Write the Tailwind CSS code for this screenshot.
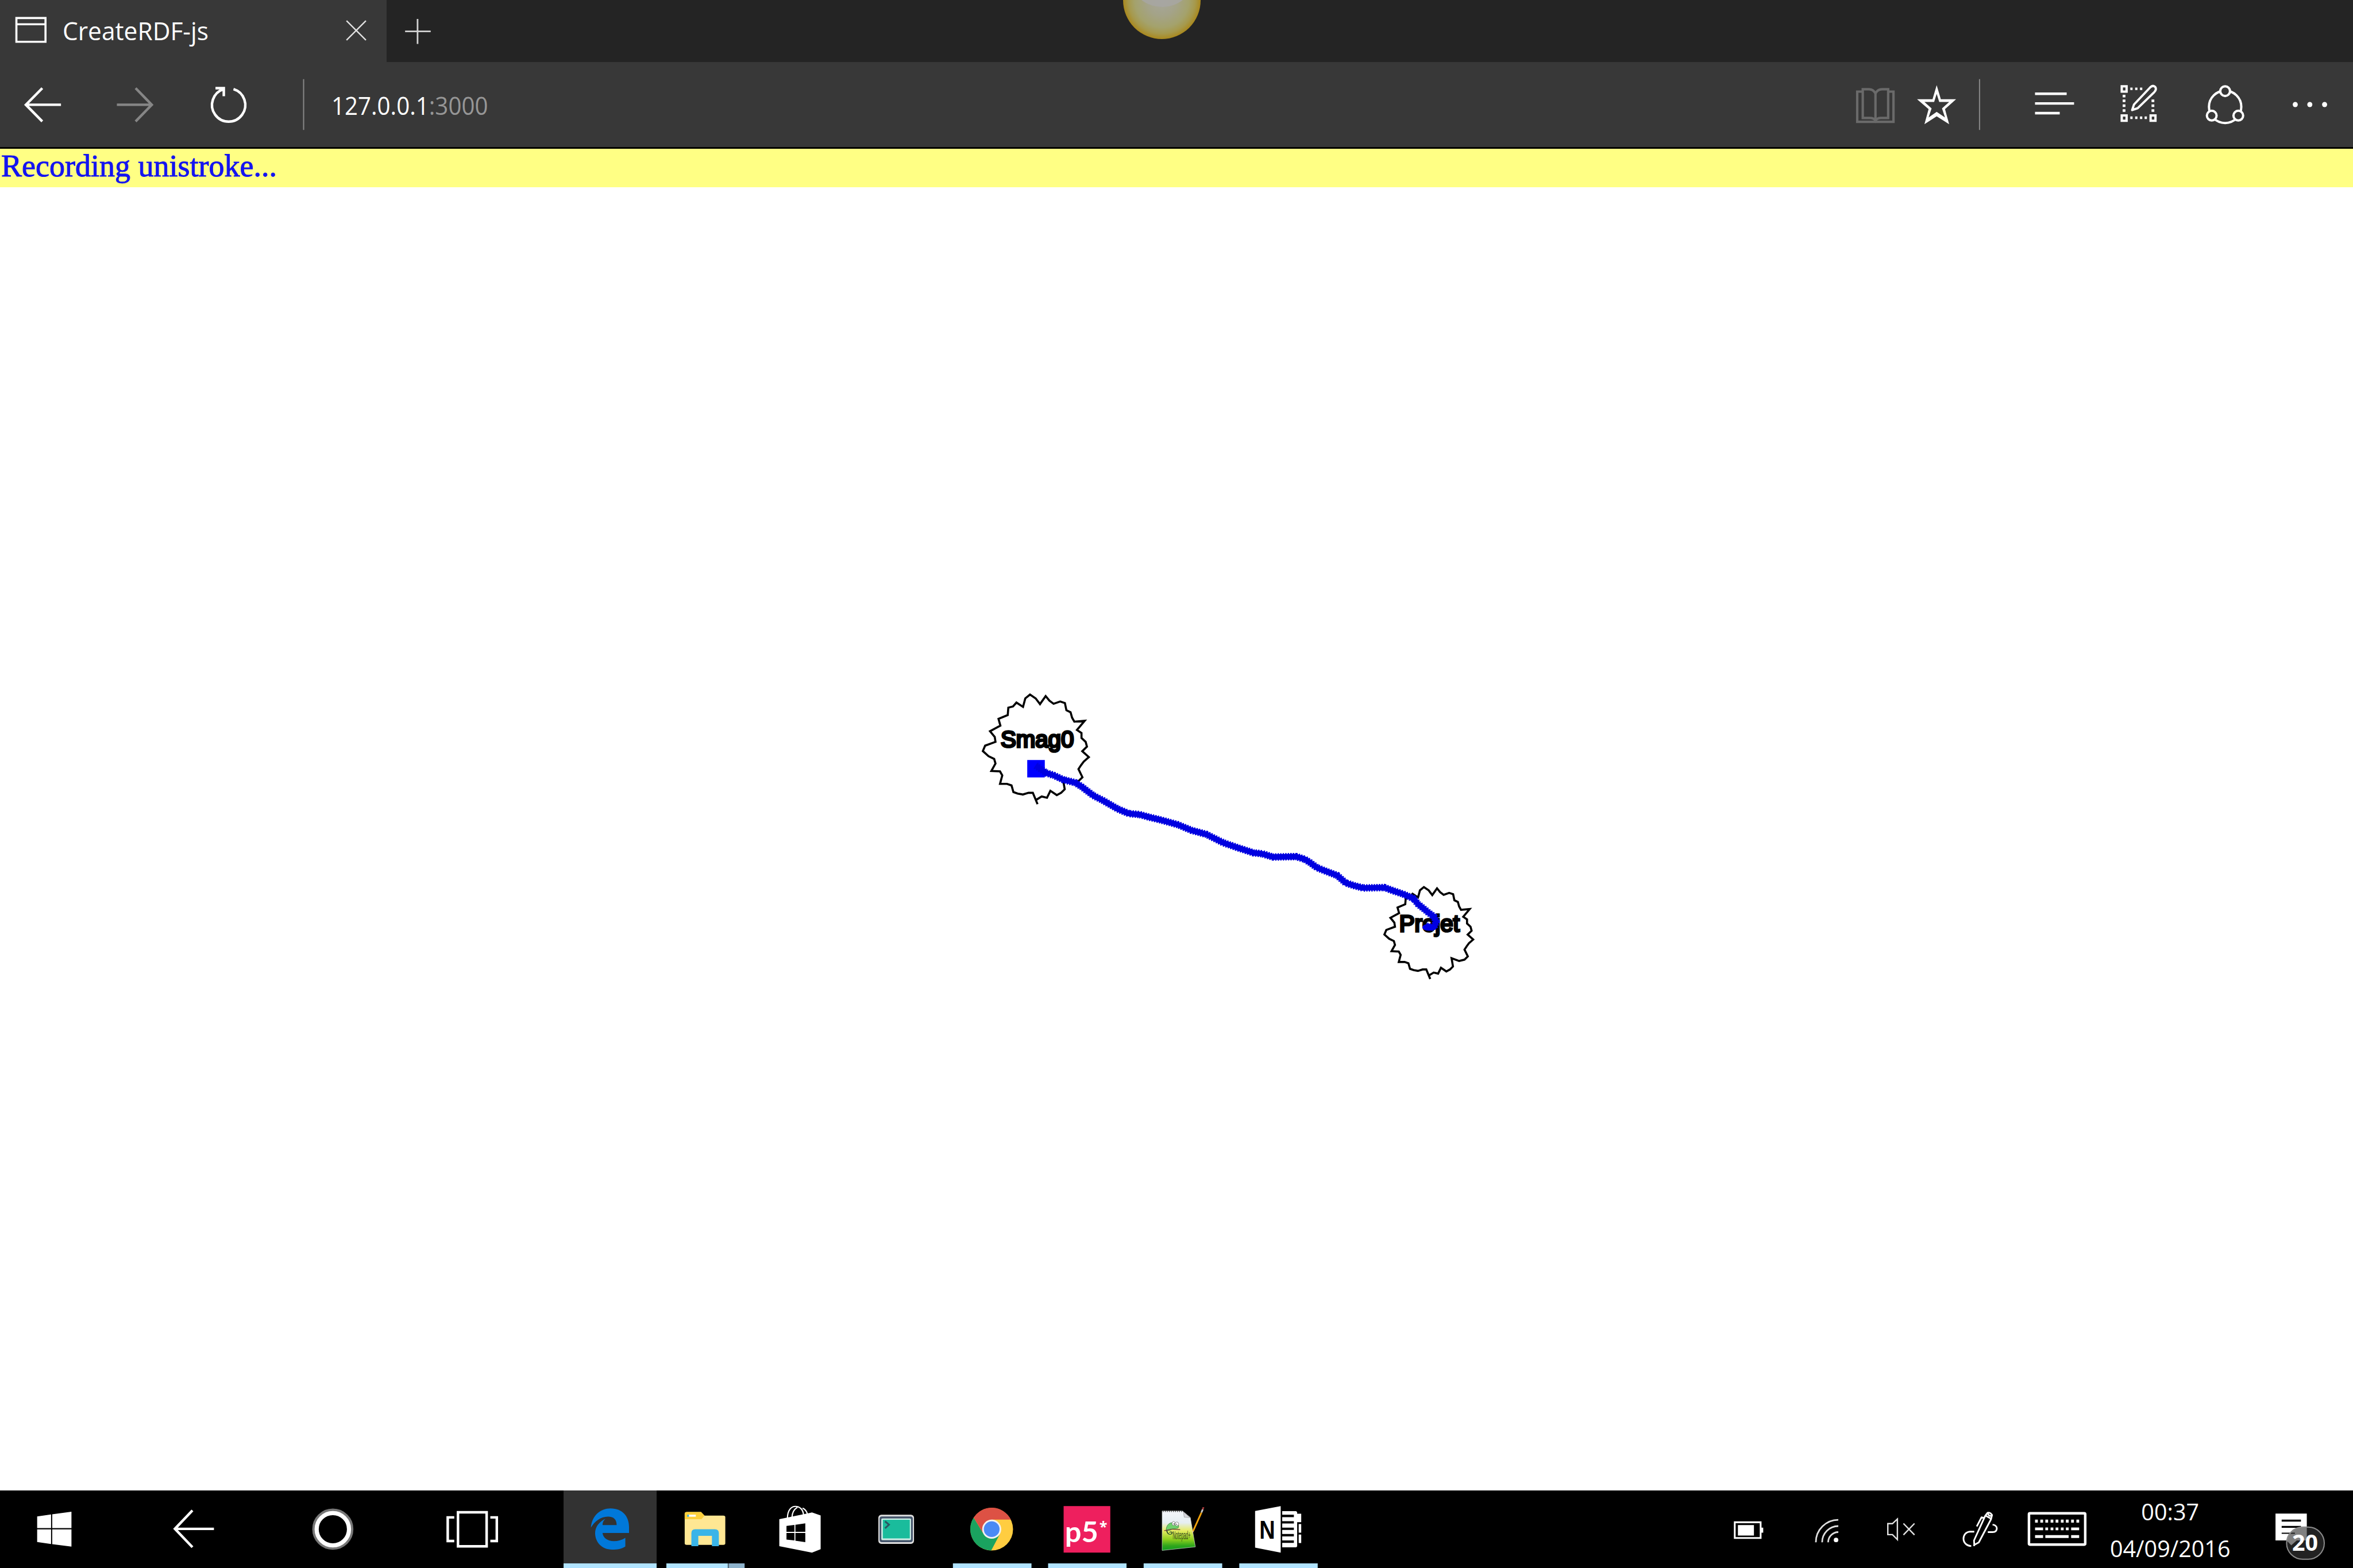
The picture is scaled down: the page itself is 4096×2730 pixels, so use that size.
<!DOCTYPE html>
<html lang="en">
<head>
<meta charset="utf-8">
<title>CreateRDF-js</title>
<script src="https://cdn.jsdelivr.net/npm/@tailwindcss/browser@4"></script>
</head>
<body class="bg-white overflow-hidden">
<div class="flex flex-col w-[4096px] h-[2730px] overflow-hidden font-['Open_Sans','Noto_Sans',sans-serif]">

  <!-- Tab strip -->
  <header class="relative flex h-[108px] shrink-0 bg-[#242424] overflow-hidden">
    <div class="flex items-center w-[673px] h-full bg-[#383838] text-white">
      <svg class="h-[108px] w-auto shrink-0" viewBox="0 0 136 134.3" fill="none" stroke="#fff" stroke-width="4.500"><path d="M35.500 39H98.500V90.500H35.500ZM35.500 52.500H98.500"/></svg>
      <span class="grow whitespace-nowrap text-[43px] leading-[108px]"><span class="inline-block origin-left scale-x-[0.987]">CreateRDF-js</span></span>
      <svg class="h-[108px] w-auto shrink-0" viewBox="700 0 137 134.3" fill="none" stroke="#e0e0e0" stroke-width="3"><path d="M750 45L792 87M792 45L750 87"/></svg>
    </div>
    <svg class="h-[108px] w-auto shrink-0" viewBox="837 0 140 134.3" fill="none" stroke="#d2d2d2" stroke-width="3.500"><path d="M877 68H932.500M904 41V95"/></svg>
    <div class="absolute left-[1955px] -top-[67px] size-[135px] rounded-full overflow-hidden bg-[radial-gradient(circle_closest-side,#a6a69c_0%,#a4a388_40%,#a4a26c_70%,#a6994c_86%,#a98c28_97%,#a9881c_100%)]">
      <div class="absolute left-[20px] top-[7px] w-[96px] h-[72px] rounded-[50%] bg-[#a7a6a4]/80"></div>
    </div>
  </header>

  <!-- Address bar -->
  <nav class="flex h-[148px] shrink-0 bg-[#383838] text-white">
    <svg class="h-full w-auto shrink-0" viewBox="0 134 192 184" fill="none" stroke="#fff" stroke-width="5.500"><path d="M132 226.500H56M91.500 190.500L56 226.500L91.500 262.500"/></svg>
    <svg class="h-full w-auto shrink-0" viewBox="192 134 208 184" fill="none" stroke="#868686" stroke-width="5.500"><path d="M253.500 226.500H329M294 190.500L329 226.500L294 262.500"/></svg>
    <svg class="h-full w-auto shrink-0" viewBox="400 134 220 184" fill="none" stroke="#fff" stroke-width="5.500"><path d="M484 192.500A36 36 0 1 0 505 192.500M466 190.500H484V208"/></svg>
    <svg class="h-full w-auto shrink-0" viewBox="620 134 98 184" stroke="#878787" stroke-width="2.500"><path d="M656.700 171V281"/></svg>
    <div class="whitespace-nowrap text-[43px] leading-[148px] pt-[2px]"><span class="inline-block origin-left scale-x-[0.936]">127.0.0.1<span class="text-[#969696]">:3000</span></span></div>

    <svg class="ml-auto h-full w-auto shrink-0" viewBox="3980 134 144 184" fill="none" stroke="#6a6a6a" stroke-width="5.200"><path d="M4029 198H4018.500V263.500H4097V198H4087M4058 202Q4053 193 4044 193H4030.500V255H4046Q4055 255 4058 261Q4061 255 4070 255H4085.500V193H4072Q4063 193 4058 202V259"/></svg>
    <svg class="h-full w-auto shrink-0" viewBox="4124 134 136 184" fill="#fff"><path fill-rule="evenodd" d="M4191.500 184L4200.500 214.500H4233.500L4209.500 236L4218.500 268.500L4191.500 251.500L4165 268.500L4174 236L4149 214.500H4182.500ZM4191.500 203L4186 220.500H4165L4180.500 234.500L4174 254L4191.500 242L4209.500 254L4203 234.500L4218.500 220.500H4197Z"/></svg>
    <svg class="h-full w-auto shrink-0" viewBox="4260 134 80 184" stroke="#878787" stroke-width="2.500"><path d="M4283.500 171V281"/></svg>
    <svg class="h-full w-auto shrink-0" viewBox="4340 134 200 184" fill="none" stroke="#fff" stroke-width="5.500"><path d="M4404 202.700H4472.500M4404 223.700H4488.500M4404 244.700H4457.500"/></svg>
    <svg class="h-full w-auto shrink-0" viewBox="4540 134 180 184" fill="none" stroke="#fff" stroke-width="5">
      <path d="M4591.500 186.500h10.500v11.500h-10.500ZM4591.500 249.500h10.500v11.500h-10.500ZM4654 249.500h10.500v11.500h-10.500Z"/>
      <path stroke-width="5.500" d="M4610 192h5M4620.500 192h5M4631 192h5M4610 254.700h5M4620.500 254.700h5M4631 254.700h5M4641 254.700h5M4593.500 207.700h6M4593.500 218h6M4593.500 228.500h6M4593.500 239h6M4656 218h6M4656 228.500h6M4656 239h6"/>
      <path stroke-width="4.800" stroke-linejoin="round" d="M4614 238L4618 226L4653 189Q4659 183 4664 188Q4667.500 193 4662 199L4626 234Z"/>
    </svg>
    <svg class="h-full w-auto shrink-0" viewBox="4720 134 180 184" fill="#383838" stroke="#fff" stroke-width="5"><circle cx="4815" cy="231" r="35"/><circle cx="4815" cy="197" r="10.500"/><circle cx="4786" cy="250" r="10.500"/><circle cx="4843.500" cy="250" r="10.500"/></svg>
    <svg class="h-full w-auto shrink-0" viewBox="4900 134 192 184" fill="#fff"><circle cx="4966.500" cy="226" r="5.500"/><circle cx="4998" cy="226" r="5.500"/><circle cx="5030" cy="226" r="5.500"/></svg>
  </nav>
  <div class="h-[3px] shrink-0 bg-black"></div>

  <!-- Status line -->
  <div class="h-[67px] shrink-0 pl-[2px] bg-[#ffff84] text-[#1414f0] whitespace-nowrap font-['Liberation_Serif',serif] text-[54px] leading-[60px] [-webkit-text-stroke:1px_#1414f0]">Recording unistroke...</div>

  <!-- Drawing canvas -->
  <main class="h-[2269px] shrink-0 bg-white">
    <svg class="w-[4096px] h-[2269px]" viewBox="0 405.300 5092 2820.700" preserveAspectRatio="none">
      <defs>
        <path id="node" vector-effect="non-scaling-stroke" fill="none" stroke="#000" stroke-width="3.600" d="M405 842L380 768L357 768L327 779L300 773L277 763L267 720L243 710L206 710L218 655L206 629L160 626L182 578L175 548L145 530L115 497L127 462L182 437L178 405L153 368L208 332L198 288L247 263L250 215L275 207L293 182L328 210L340 155L365 130L395 155L418 192L448 140L468 170L490 190L525 175L550 185L558 232L580 245L588 280L600 306L655 300L614 360L638 380L638 412L660 437L667 468L642 498L677 536L650 565L636 588L622 614L643 667L622 692L588 702L540 681L549 745L530 768L507 783L473 755L455 800L427 792L400 812"/>
        <path id="trail" fill="none" stroke="#0000e0" stroke-linejoin="round" d="M2241 1657L2264 1673L2280 1678L2302 1688L2327 1694L2341 1703L2366 1722L2386 1732L2419 1751L2443 1761L2466 1763L2488 1769L2513 1775L2549 1785L2578 1797L2611 1806L2647 1824L2682 1836L2713 1846L2732 1848L2755 1855L2805 1854L2824 1860L2835 1867L2850 1878L2870 1886L2894 1895L2912 1911L2931 1917L2950 1922L2996 1921L3015 1928L3036 1935L3059 1945L3069 1957L3091 1975L3103 1984L3108 1995L3103 2007L3086 2005"/>
      </defs>
      <use href="#node" transform="translate(2080 1460) scale(.40816 .33333)"/>
      <use href="#node" transform="translate(2956.600 1883.700) scale(.3419 .2795)"/>
      <g font-family="Liberation Sans, sans-serif" font-size="50" stroke="#000" stroke-width="4.500">
        <text x="2165.500" y="1617.500">Smag0</text>
        <text x="3028" y="2016.500">Projet</text>
      </g>
      <rect x="2223" y="1645" width="38" height="37.700" fill="#0000ff"/>
      <use href="#trail" stroke-width="12"/>
      <use href="#trail" stroke-width="16" stroke-dasharray="3 2.500"/>
      <ellipse cx="3092" cy="2007" rx="14" ry="7.500" fill="#0000e8"/>
    </svg>
  </main>

  <!-- Taskbar -->
  <footer class="flex h-[135px] shrink-0 bg-black text-white">
    <svg class="h-full w-auto shrink-0" viewBox="0 3226.200 235 167.800" fill="#fff"><path d="M80.400 3282.300L110.500 3278V3307.500H80.400ZM113 3277.700L154.600 3272.300V3307.500H113ZM80.400 3310.500H110.500V3342L80.400 3337.700ZM113 3310.500H154.600V3347.700L113 3342.300Z"/></svg>
    <svg class="h-full w-auto shrink-0" viewBox="235 3226.200 365 167.800" fill="none" stroke="#fff" stroke-width="5.500"><path d="M463 3309.300H379M416.500 3269.500L378.500 3309.300L416.500 3349"/></svg>
    <svg class="h-full w-auto shrink-0" viewBox="600 3226.200 240 167.800" fill="none"><circle cx="719.800" cy="3310" r="41.500" stroke="#777" stroke-width="6"/><circle cx="719.800" cy="3310" r="35" stroke="#fff" stroke-width="9"/></svg>
    <svg class="h-full w-auto shrink-0" viewBox="840 3226.200 379 167.800" fill="none" stroke="#fff" stroke-width="5.500"><path d="M990.700 3273.500H1052.700V3347H990.700ZM982.600 3284.500H968.500V3335.500H982.600M1060.700 3284.500H1074.700V3335.500H1060.700"/></svg>
    <!-- Edge -->
    <svg class="h-full w-auto shrink-0 bg-[#323232]" viewBox="1219 3226.200 202 167.800"><rect x="1219" y="3384" width="202.500" height="10" fill="#b0e3ff"/><path transform="translate(1200 3210) scale(.5357 .3333)" fill="#0078d9" d="M146 290C150 210 185 165 225 165C275 165 300 220 300 285V325H193C195 358 215 378 238 378C256 378 272 370 285 356V412C270 428 252 433 232 433C190 433 163 385 163 325C163 285 180 250 205 232C197 243 193 255 193 273H250C250 237 238 218 215 218C185 218 160 250 146 290Z"/></svg>
    <!-- Explorer -->
    <svg class="h-full w-auto shrink-0" viewBox="1421 3226.200 210 167.800"><g transform="translate(1200 3210) scale(.5357 .3333)"><path fill="#ffe793" d="M526 200Q526 188 535 188H592L606 212H682Q690 212 690 222V392Q690 402 682 402H534Q526 402 526 392Z"/><path fill="#fed03c" d="M526 235V198Q526 188 534 188H592L606 212L594 235Z"/><path fill="#fff" d="M541 206H571V219H541Z"/><path fill="#3ab4e8" d="M536 206H543V219H536ZM553 410V325Q553 300 568 300H648Q664 300 664 325V410H636V343H581V410Z"/><path fill="#b0e3ff" d="M452 522H700V552H452Z"/><path fill="#8eb3cc" d="M704 522H768V552H704Z"/><path fill="#5c7485" d="M700 522H704V552H700Z"/></g></svg>
    <!-- Store -->
    <svg class="h-full w-auto shrink-0" viewBox="1631 3226.200 207 167.800"><g transform="translate(1200 3210) scale(.5357 .3333)"><path fill="#fff" d="M908 235L1030 195L1040 191L1075 211V430L1040 452L908 410Z"/><path d="M937 279L969 272V317H937ZM973 271L1013 262V317H973ZM937 325H969V373L937 367ZM973 325H1013V384L973 375Z"/><path fill="none" stroke="#fff" stroke-width="2.200" vector-effect="non-scaling-stroke" d="M941 228C941 175 957 152 973 152C991 152 1004 172 1006 208M959 224C960 190 968 170 981 158M1002 163C1012 170 1018 182 1021 200"/></g></svg>
    <!-- Console -->
    <svg class="h-full w-auto shrink-0" viewBox="1838 3226.200 205 167.800"><g transform="translate(1200 3210) scale(.5357 .3333)"><rect x="1307" y="206" width="144" height="189" rx="12" ry="20" fill="#dedede"/><rect x="1312" y="217" width="134" height="167" rx="9" ry="15" fill="#44546b"/><rect x="1319" y="230" width="120" height="141" rx="4" ry="7" fill="#cfeee7"/><rect x="1325" y="239" width="109" height="121" fill="#1abc9c"/><path fill="none" stroke="#2c5663" stroke-width="3" vector-effect="non-scaling-stroke" d="M1334 249L1350 271L1334 294"/></g></svg>
    <!-- Chrome -->
    <svg class="h-full w-auto shrink-0" viewBox="2043 3226.200 207 167.800"><rect x="2061.400" y="3384" width="170" height="10" fill="#b0e3ff"/><g transform="translate(2145.300 3310)"><circle r="46.200" fill="#ffcd40"/><path fill="#1aa35f" d="M-39 -25A46.200 46.200 0 0 0 -1 46.200L17 12L-19 8Z"/><path fill="#dd5144" d="M-39 -25A46.200 46.200 0 0 1 41.500 -20.600H0L-19 8Z"/><circle r="20.600" fill="#f1f1f1"/><circle r="17" fill="#4a8af5"/></g></svg>
    <!-- p5 -->
    <svg class="h-full w-auto shrink-0" viewBox="2250 3226.200 206 167.800"><rect x="2268" y="3384" width="169.700" height="10" fill="#b0e3ff"/><rect x="2301.600" y="3260" width="101" height="100.700" fill="#ee1f5e"/><g fill="#fff" font-weight="700"><text x="2304.500" y="3338.500" font-family="Lato, sans-serif" font-size="62" textLength="72" lengthAdjust="spacingAndGlyphs">p5</text><text x="2379" y="3315.500" font-family="Open Sans, sans-serif" font-size="30" textLength="17" lengthAdjust="spacingAndGlyphs">*</text></g></svg>
    <!-- Notepad++ -->
    <svg class="h-full w-auto shrink-0" viewBox="2456 3226.200 206 167.800">
      <defs><linearGradient id="page" x1="0" y1="0" x2="0" y2="1"><stop offset="0" stop-color="#f4f6fa"/><stop offset=".3" stop-color="#e6eef2"/><stop offset=".5" stop-color="#e6ec62"/><stop offset=".72" stop-color="#8fd01e"/><stop offset=".88" stop-color="#2fa61c"/><stop offset="1" stop-color="#109a20"/></linearGradient></defs>
      <rect x="2474.400" y="3384" width="170" height="10" fill="#b0e3ff"/>
      <g transform="translate(2040 3210) scale(.5485 .3333)">
        <path fill="url(#page)" stroke="#d5dcd5" stroke-width="2" d="M865 182H945L976 224L996 415L865 438Z"/>
        <path fill="#d6d6dc" stroke="#777" stroke-width="1.500" d="M949 187L952 222L975 225Z"/>
        <path fill="none" stroke="#444" stroke-width="8" stroke-dasharray="3 5" d="M868 184H946"/>
        <path fill="#6fd06c" stroke="#2b6b35" stroke-width="2" d="M881 312C880 280 890 258 905 258C925 258 935 275 928 292C918 300 905 292 900 305Z"/>
        <path fill="none" stroke="#274a2c" stroke-width="4" d="M883 305C884 330 895 340 902 330C908 318 898 312 895 322"/>
        <path fill="none" stroke="#7a4a3a" stroke-width="5" d="M873 310L900 300L936 303"/>
        <ellipse cx="910" cy="263" rx="6" ry="13" fill="#fff" stroke="#333" stroke-width="1.500"/><ellipse cx="923" cy="266" rx="7" ry="13" fill="#fff" stroke="#333" stroke-width="1.500"/><circle cx="912" cy="266" r="2.500"/><circle cx="922" cy="268" r="2.500"/>
        <path fill="none" stroke="#f0a20c" stroke-width="7" d="M1020 192L987 312"/><path fill="none" stroke="#c9c9c9" stroke-width="7" d="M1025 172L1020 192"/><path fill="none" stroke="#a33a3a" stroke-width="7" d="M1028 157L1025 172"/><path fill="#e8c890" d="M984 308L990 314L984 328Z"/>
      </g>
      <text x="2537" y="3332" font-family="Liberation Sans, sans-serif" font-size="24" fill="#3b4a1c" textLength="39" lengthAdjust="spacingAndGlyphs">Notepad+</text>
    </svg>
    <!-- OneNote -->
    <svg class="h-full w-auto shrink-0" viewBox="2662 3226.200 207 167.800"><rect x="2681" y="3384" width="169.700" height="10" fill="#b0e3ff"/><path transform="translate(2040 3210) scale(.5485 .3333)" fill="#fff" d="M1231 182L1332 150V452L1231 420ZM1338 183H1393L1397 190V200H1413V255H1397V411L1393 418H1338V389H1384V373H1338V347H1384V331H1338V305H1384V290H1338V263H1384V248H1338V222H1384V206H1338ZM1403 267H1413V323H1403ZM1403 335H1413V390H1403Z"/><text x="2724.500" y="3330.500" font-family="Liberation Sans, sans-serif" font-weight="700" font-size="55" textLength="34" lengthAdjust="spacingAndGlyphs">N</text></svg>

    <!-- Tray -->
    <svg class="ml-auto h-full w-auto shrink-0" viewBox="3713 3226.200 140 167.800" fill="none" stroke="#fff" stroke-width="3.800"><path d="M3755 3295H3811V3329H3755Z"/><path fill="#fff" stroke="none" d="M3812 3306.700H3816.600V3317.700H3812ZM3761.800 3301H3796.500V3323.700H3761.800Z"/></svg>
    <svg class="h-full w-auto shrink-0" viewBox="3853 3226.200 180 167.800" fill="none" stroke="#dedede" stroke-width="3.500"><path d="M3930 3338.300A48.600 48.600 0 0 1 3978.600 3289.700M3943.600 3338.300A35 35 0 0 1 3978.600 3303.300M3956.600 3338.300A22 22 0 0 1 3978.600 3316.300"/><circle cx="3973.700" cy="3333.300" r="4.900" fill="#fff" stroke="none"/></svg>
    <svg class="h-full w-auto shrink-0" viewBox="4033 3226.200 167 167.800" fill="none" stroke="#e2e2e2" stroke-width="3"><path d="M4085.500 3298H4095.500L4106.200 3288V3332.500L4095.500 3321.800H4085.500ZM4119.300 3297.700L4143.200 3322.300M4143.200 3297.700L4119.300 3322.300"/></svg>
    <svg class="h-full w-auto shrink-0" viewBox="4200 3226.200 160 167.800"><path transform="translate(3700 3210) scale(.5421 .3333)" fill="none" stroke="#fff" stroke-width="2.900" stroke-linejoin="round" vector-effect="non-scaling-stroke" d="M1057 402L1056 373L1101 212L1110 194Q1117 190 1122 197L1128 208L1124 235L1075 386ZM1056 410L1057 395M1102 212L1124 232M1112 196Q1112 216 1126 214M1067 282L1086 223L1097 228M1057 316H1040C1022 318 1014 340 1014 362C1014 390 1028 408 1045 410M1111 319H1130C1142 319 1147 308 1147 295C1147 280 1138 271 1130 271"/></svg>
    <svg class="h-full w-auto shrink-0" viewBox="4360 3226.200 180 167.800"><rect x="4391" y="3275.500" width="121.700" height="67.800" rx="2" fill="none" stroke="#fff" stroke-width="5.500"/><path transform="translate(3700 3210) scale(.5421 .3333)" fill="#fff" d="M1299 238h11v19h-11ZM1320 238h11v19h-11ZM1340 238h11v19h-11ZM1361 238h11v19h-11ZM1381 238h11v19h-11ZM1402 238h11v19h-11ZM1422 238h11v19h-11ZM1443 238h11v19h-11ZM1464 238h11v19h-11ZM1299 289h32v18h-32ZM1340 289h11v18h-11ZM1361 289h11v18h-11ZM1381 289h11v18h-11ZM1402 289h11v18h-11ZM1422 289h11v18h-11ZM1443 289h32v18h-32ZM1299 339h32v18h-32ZM1340 339h93v18h-93ZM1443 339h32v18h-32Z"/></svg>
    <div class="flex flex-col items-center w-[252px] pt-[6px] shrink-0 whitespace-nowrap text-[39.500px] leading-[63.500px]">
      <span>00:37</span>
      <span>04/09/2016</span>
    </div>
    <svg class="h-full w-auto shrink-0" viewBox="4853 3226.200 239 167.800"><path fill="#fff" d="M4924 3276.300H4991.700V3334.300H4970L4958 3345L4948 3334.300H4924Z"/><path d="M4937.300 3289.300H4979V3293.700H4937.300ZM4937.300 3303H4979V3307H4937.300ZM4937.300 3317.500H4966V3320H4937.300Z"/><rect x="4948" y="3305.500" width="81.500" height="69.500" rx="34.700" fill="#363636" fill-opacity=".63" stroke="#8c8c8c" stroke-width="2.500"/><text x="4988" y="3356.500" text-anchor="middle" font-weight="700" font-size="48.500" fill="#fff" textLength="56" lengthAdjust="spacingAndGlyphs">20</text></svg>
  </footer>
</div>
</body>
</html>
